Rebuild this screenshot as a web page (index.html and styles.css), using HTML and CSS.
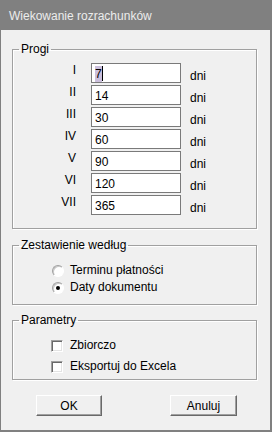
FILE: index.html
```html
<!DOCTYPE html>
<html lang="pl">
<head>
  <meta charset="UTF-8">
  <meta name="viewport" content="width=device-width, initial-scale=1.0">
  <title>Wiekowanie rozrachunków</title>
  <link rel="stylesheet" href="styles.css">
</head>
<body>
  <div class="window">
    <div class="titlebar">Wiekowanie rozrachunków</div>

    <div class="content">
      <fieldset class="group">
        <legend>Progi</legend>
        <div class="group-body thresholds">
          <div class="row">
            <span class="num">I</span>
            <div class="field"><span class="sel">7</span><span class="caret"></span></div>
            <span class="unit">dni</span>
          </div>
          <div class="row">
            <span class="num">II</span>
            <div class="field">14</div>
            <span class="unit">dni</span>
          </div>
          <div class="row">
            <span class="num">III</span>
            <div class="field">30</div>
            <span class="unit">dni</span>
          </div>
          <div class="row">
            <span class="num">IV</span>
            <div class="field">60</div>
            <span class="unit">dni</span>
          </div>
          <div class="row">
            <span class="num">V</span>
            <div class="field">90</div>
            <span class="unit">dni</span>
          </div>
          <div class="row">
            <span class="num">VI</span>
            <div class="field">120</div>
            <span class="unit">dni</span>
          </div>
          <div class="row">
            <span class="num">VII</span>
            <div class="field">365</div>
            <span class="unit">dni</span>
          </div>
        </div>
      </fieldset>

      <fieldset class="group group-sort">
        <legend>Zestawienie według</legend>
        <div class="group-body options">
          <label class="opt"><span class="radio"></span>Terminu płatności</label>
          <label class="opt"><span class="radio checked"></span>Daty dokumentu</label>
        </div>
      </fieldset>

      <fieldset class="group group-params">
        <legend>Parametry</legend>
        <div class="group-body checks">
          <label class="check"><span class="box"></span>Zbiorczo</label>
          <label class="check"><span class="box"></span>Eksportuj do Excela</label>
        </div>
      </fieldset>

      <div class="buttons">
        <button class="btn">OK</button>
        <button class="btn">Anuluj</button>
      </div>
    </div>
  </div>
</body>
</html>
```

FILE: styles.css
```css
* { margin: 0; padding: 0; box-sizing: border-box; }
body {
  font-family: 'Liberation Sans', Arial, sans-serif;
  font-size: 12px;
  line-height: 14px;
  color: #000;
  background: #f0f0f0;
}
.window {
  width: 272px;
  height: 432px;
  background: #f0f0f0;
  border-left: 1px solid #808080;
  border-right: 2px solid #808080;
  border-bottom: 2px solid #808080;
}
.titlebar {
  height: 30px;
  margin-left: -1px;
  margin-right: -2px;
  background: #808080;
  color: #ececec;
  padding: 2px 0 0 9px;
  line-height: 28px;
  font-size: 12px;
}

/* group boxes */
.group {
  width: 245px;
  margin: 9px 0 0 11px;
  border: 1px solid #a0a0a0;
  box-shadow: 1px 1px 0 #fff, inset 1px 1px 0 #fff;
  padding: 0;
  min-inline-size: 0;
}
.group:first-child { margin-top: 12px; }
.group-params { margin-top: 8px; }
.group legend {
  margin-left: 6px;
  padding: 0 2px;
  line-height: 14px;
}

/* progi */
.thresholds {
  padding: 7px 0 13px 0;
  display: flex;
  flex-direction: column;
  gap: 2px;
}
.row {
  display: flex;
  align-items: flex-start;
  height: 20px;
}
.num {
  width: 63px;
  text-align: right;
}
.field {
  width: 90px;
  height: 20px;
  margin-left: 15px;
  background: #fff;
  border: 1px solid #7a7a7a;
  padding: 2px 3px 0;
  line-height: 16px;
  display: flex;
  align-items: flex-start;
}
.sel { background: #cbbfdc; }
.caret {
  width: 1px;
  height: 15px;
  background: #000;
}
.unit {
  margin-left: 9px;
  padding-top: 6px;
}

/* zestawienie */
.options { padding: 10px 0 8px 39px; }
.opt {
  display: flex;
  align-items: center;
  height: 17px;
  line-height: 17px;
}
.radio {
  width: 12px;
  height: 12px;
  margin-right: 6px;
  border-radius: 50%;
  background: #fff;
  border: 1px solid;
  border-color: #a0a0a0 #fff #fff #a0a0a0;
  box-shadow: inset 1px 1px 0 #c8c8c8;
  position: relative;
}
.radio.checked::after {
  content: "";
  position: absolute;
  left: 3px;
  top: 3px;
  width: 4px;
  height: 4px;
  border-radius: 50%;
  background: #000;
}

/* parametry */
.checks {
  padding: 8px 0 3px 38px;
  display: flex;
  flex-direction: column;
  gap: 1px;
}
.check {
  display: flex;
  align-items: center;
  height: 20px;
  line-height: 20px;
}
.box {
  width: 12px;
  height: 12px;
  margin: 1px 7px 0 0;
  background: #fff;
  border: 1px solid;
  border-color: #a0a0a0 #fff #fff #a0a0a0;
  box-shadow: inset 1px 1px 0 #696969, inset -1px -1px 0 #e3e3e3;
}

/* buttons */
.buttons {
  display: flex;
  justify-content: space-between;
  margin-top: 15px;
  padding: 0 33px 0 35px;
}
.btn {
  width: 66px;
  height: 21px;
  font-family: inherit;
  font-size: 12px;
  color: #000;
  background: #f0f0f0;
  border: 1px solid;
  border-color: #fff #696969 #696969 #fff;
  box-shadow: inset -1px -1px 0 #a0a0a0;
}
.btn:last-child { width: 67px; }
```
